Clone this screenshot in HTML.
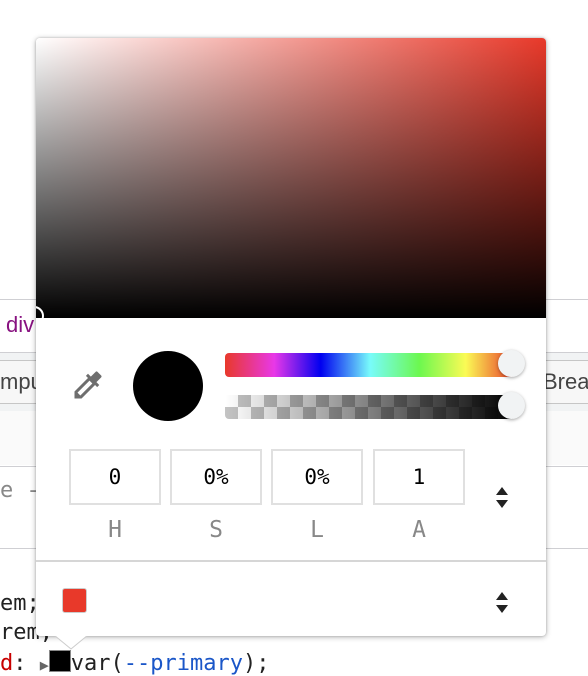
<!DOCTYPE html>
<html><head><style>
body{margin:0;width:588px;height:674px;overflow:hidden;background:#fff;position:relative;font-family:"Liberation Sans",sans-serif}
.a{position:absolute}
.mono{font-family:"DejaVu Sans Mono","Liberation Mono",monospace}
</style></head><body>
<div class="a" style="left:0;top:299px;width:588px;height:1px;background:#cfcfd3"></div>
<div class="a" style="left:6px;top:312px;font-size:22px;color:#881280">div</div>
<div class="a" style="left:0;top:352px;width:588px;height:58px;background:#f1f3f4;border-top:1px solid #cfcfd3;border-bottom:1px solid #cfcfd3"></div>
<div class="a" style="left:-10px;top:360px;width:60px;height:42px;border:1px solid #c6c6c6;border-radius:4px;background:#f7f7f7"></div>
<div class="a" style="left:0;top:369px;font-size:22px;color:#444">mpu</div>
<div class="a" style="left:540px;top:360px;width:60px;height:42px;border:1px solid #c6c6c6;border-radius:4px;background:#f7f7f7"></div>
<div class="a" style="left:543px;top:369px;font-size:22px;color:#444">Brea</div>
<div class="a" style="left:0;top:411px;width:588px;height:54px;background:#fafafa"></div>
<div class="a" style="left:0;top:466px;width:588px;height:1px;background:#cfcfd3"></div>
<div class="a mono" style="left:0;top:478px;font-size:22px;color:#888">e -</div>
<div class="a" style="left:0;top:548px;width:588px;height:1px;background:#cfcfd3"></div>
<div class="a mono" style="left:0;top:591px;font-size:22px;color:#222">em;</div>
<div class="a mono" style="left:0;top:620px;font-size:22px;color:#222">rem,</div>
<div class="a mono" style="left:0;top:650px;font-size:22px;color:#222;white-space:pre"><span style="color:#c80000">d</span>: <span style="color:#666;font-size:15px">&#9654;</span><span style="display:inline-block;width:20px;height:20px;background:#000;border:1px solid #888;vertical-align:-2px"></span>var(<span style="color:#1a56c8">--primary</span>);</div>
<div class="a" style="left:36px;top:38px;width:510px;height:598px;background:#fff;border-radius:4px;box-shadow:0 1px 6px rgba(0,0,0,.3),0 0 2px rgba(0,0,0,.2);overflow:hidden">
 <div class="a" style="left:0;top:0;width:510px;height:280px;background:linear-gradient(to top,#000,rgba(0,0,0,0)),linear-gradient(to right,#fff,#e8392a)"></div>
 <div class="a" style="left:-12px;top:268px;width:20px;height:20px;border:2px solid #fff;border-radius:50%;box-sizing:border-box"></div>
 <svg class="a" style="left:34px;top:329px" width="36" height="36" viewBox="0 0 24 24"><path fill="#6e6e6e" d="M20.7 5.6l-2.3-2.3a1 1 0 0 0-1.4 0l-3.1 3.1-1.9-1.9-1.4 1.4 1.4 1.4L3 16.3V21h4.7l9-9 1.4 1.4 1.4-1.4-1.9-1.9 3.1-3.1a1 1 0 0 0 0-1.4zM6.9 19L5 17.1l8-8L14.9 11l-8 8z"/></svg>
 <div class="a" style="left:97px;top:313px;width:70px;height:70px;border-radius:50%;background:#000"></div>
 <div class="a" style="left:189px;top:315px;width:290px;height:24px;border-radius:4px;background:linear-gradient(to right,#e8392a 0%,#e838e8 17%,#0000f0 33%,#78fbfb 50%,#6cf84f 67%,#fbfb55 83%,#e8392a 100%)"></div>
 <div class="a" style="left:189px;top:357px;width:290px;height:24px;border-radius:4px;background:linear-gradient(to right,rgba(0,0,0,0),#000),repeating-conic-gradient(#c4c4c4 0 25%,#fff 0 50%) 0 0/26px 24px"></div>
 <div class="a" style="left:462px;top:312px;width:27px;height:27px;border-radius:50%;background:#f1f3f4;box-shadow:0 1px 3px rgba(0,0,0,.35)"></div>
 <div class="a" style="left:462px;top:354px;width:27px;height:27px;border-radius:50%;background:#f1f3f4;box-shadow:0 1px 3px rgba(0,0,0,.35)"></div>
 <div class="a mono" style="left:33px;top:411px;width:88px;height:52px;border:2px solid #e0e0e0;text-align:center;line-height:52px;font-size:21px">0</div>
 <div class="a mono" style="left:134px;top:411px;width:88px;height:52px;border:2px solid #e0e0e0;text-align:center;line-height:52px;font-size:21px">0%</div>
 <div class="a mono" style="left:235px;top:411px;width:88px;height:52px;border:2px solid #e0e0e0;text-align:center;line-height:52px;font-size:21px">0%</div>
 <div class="a mono" style="left:337px;top:411px;width:88px;height:52px;border:2px solid #e0e0e0;text-align:center;line-height:52px;font-size:21px">1</div>
 <div class="a mono" style="left:33px;top:479px;width:92px;text-align:center;font-size:23px;color:#888">H</div>
 <div class="a mono" style="left:134px;top:479px;width:92px;text-align:center;font-size:23px;color:#888">S</div>
 <div class="a mono" style="left:235px;top:479px;width:92px;text-align:center;font-size:23px;color:#888">L</div>
 <div class="a mono" style="left:337px;top:479px;width:92px;text-align:center;font-size:23px;color:#888">A</div>
 <svg class="a" style="left:458px;top:445px" width="16" height="30"><path d="M2 12L8 4L14 12Z M2 17L8 25L14 17Z" fill="#222"/></svg>
 <div class="a" style="left:0;top:522px;width:510px;height:2px;background:#d6d6d6"></div>
 <div class="a" style="left:26px;top:550px;width:23px;height:23px;border-radius:3px;background:#e8392a;border:1px solid #ccc"></div>
 <svg class="a" style="left:458px;top:550px" width="16" height="30"><path d="M2 12L8 4L14 12Z M2 17L8 25L14 17Z" fill="#222"/></svg>
</div>
<svg class="a" style="left:54px;top:635px" width="34" height="16"><path d="M0 0L17 14L34 0Z" fill="#fff" stroke="#ccc" stroke-width="1"/><rect x="0" y="-1" width="34" height="2" fill="#fff"/></svg>
</body></html>
